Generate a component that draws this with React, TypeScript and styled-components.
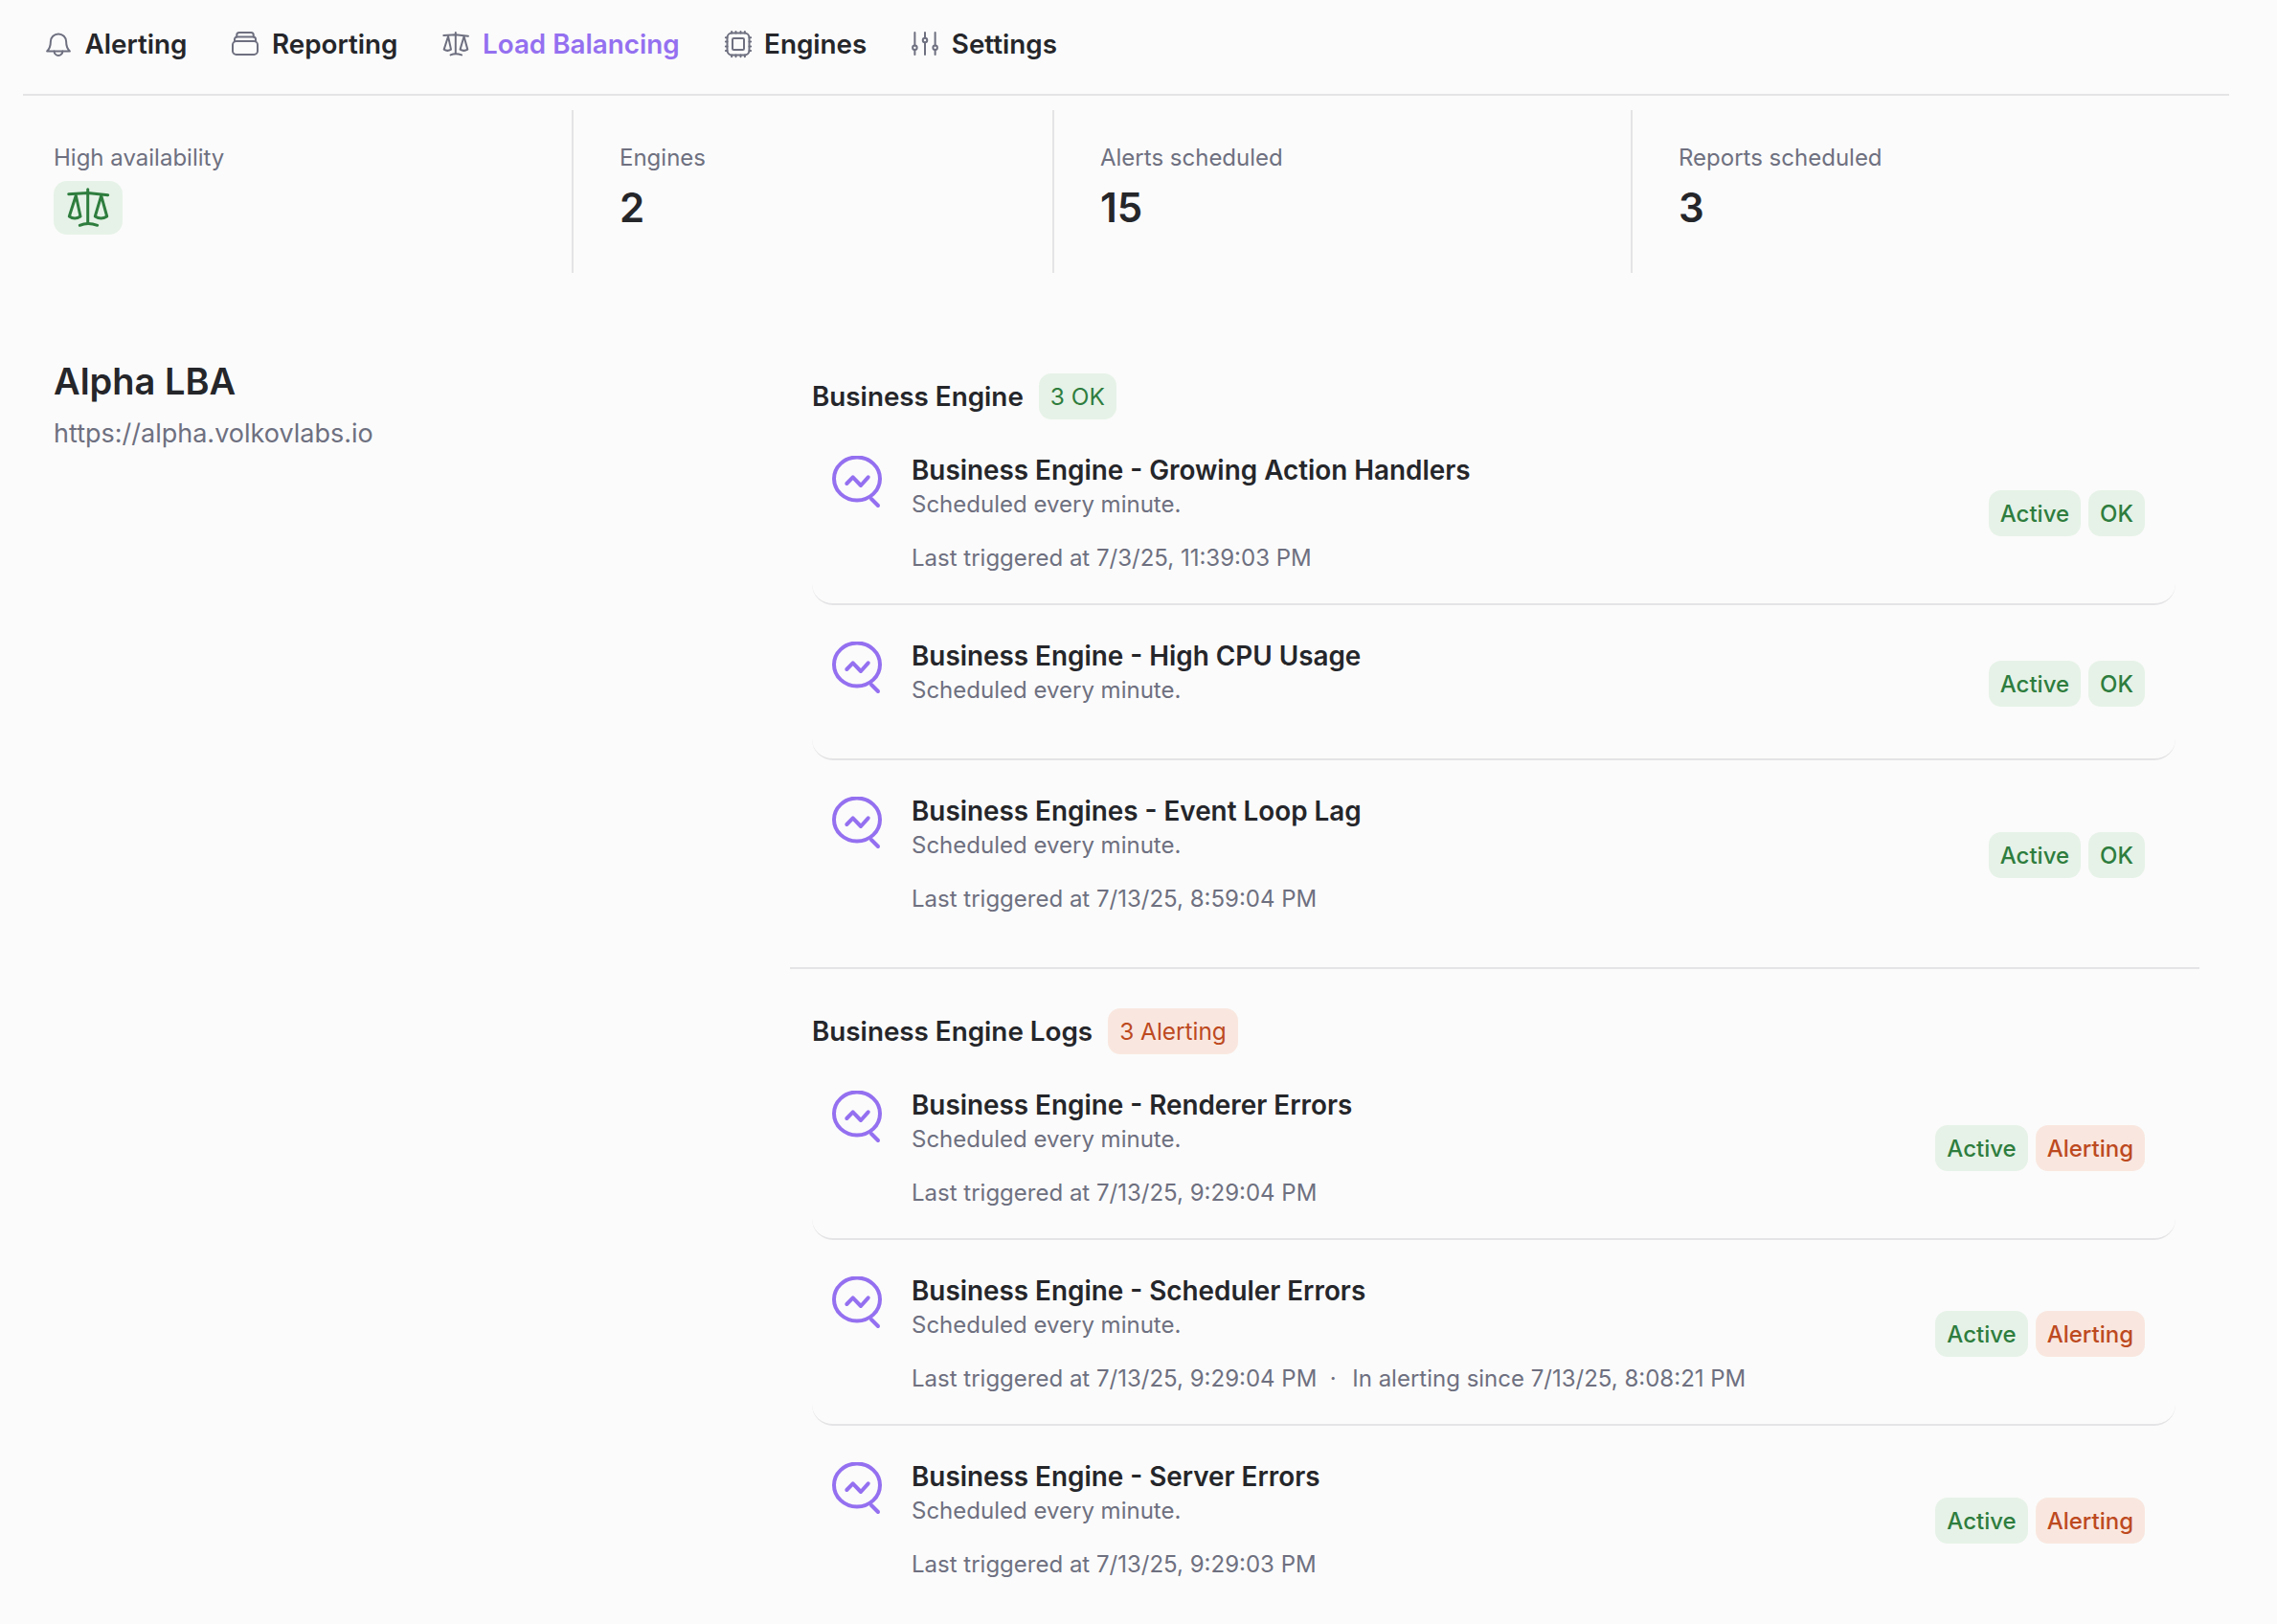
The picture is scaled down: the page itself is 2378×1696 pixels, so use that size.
import React from 'react';
import styled, { createGlobalStyle } from 'styled-components';

const GlobalStyle = createGlobalStyle`
  html, body {
    margin: 0;
    padding: 0;
    background: #fbfbfb;
  }
  body {
    font-family: Inter, "Liberation Sans", sans-serif;
    color: #25262a;
  }
  * {
    box-sizing: border-box;
  }
`;

const Page = styled.div`
  width: 2378px;
  height: 1696px;
  padding: 0 50px 0 24px;
  overflow: hidden;
`;

const Nav = styled.nav`
  display: flex;
  height: 100px;
  padding: 24px 0 0 22px;
  gap: 46px;
  border-bottom: 2px solid #e4e4e6;
`;

const NavItem = styled.a<{ $active?: boolean }>`
  display: flex;
  align-items: center;
  height: 44px;
  gap: 12.5px;
  font-size: 27.8px;
  font-weight: 600;
  color: ${p => (p.$active ? '#9470f0' : '#25262a')};
  svg {
    width: 30px;
    height: 30px;
    fill: none;
    stroke: #6e7080;
    stroke-width: 2;
    stroke-linecap: round;
    stroke-linejoin: round;
  }
  svg * {
    vector-effect: non-scaling-stroke;
  }
`;

const Stats = styled.section`
  display: grid;
  grid-template-columns: 573px 502px 604px 1fr;
  height: 170px;
  margin-top: 15px;
`;

const Stat = styled.div`
  padding: 34px 0 0 48px;
  border-left: 2px solid #e4e4e6;
  &:first-child {
    padding-left: 32px;
    border-left: none;
  }
`;

const StatLabel = styled.div`
  font-size: 24px;
  line-height: 32px;
  color: #6e7080;
`;

const StatValue = styled.div`
  margin-top: 12px;
  font-size: 42px;
  line-height: 48px;
  font-weight: 600;
`;

const StatusIcon = styled.div`
  display: flex;
  align-items: center;
  justify-content: center;
  width: 72px;
  height: 56px;
  margin-top: 8px;
  background: #e6f2e7;
  border-radius: 14px;
  svg {
    width: 48px;
    height: 44px;
    fill: none;
    stroke: #2e7d3e;
    stroke-width: 3;
    stroke-linecap: round;
    stroke-linejoin: round;
  }
`;

const Main = styled.main`
  display: grid;
  grid-template-columns: 801px 1472px;
  margin-top: 86px;
`;

const Instance = styled.div`
  padding-left: 32px;
`;

const InstanceName = styled.h1`
  margin: 0;
  padding-top: 0.5px;
  font-size: 38px;
  line-height: 52px;
  font-weight: 600;
`;

const InstanceUrl = styled.div`
  margin-top: 11.5px;
  font-size: 27px;
  line-height: 36px;
  color: #6e7080;
`;

const Group = styled.section`
  padding: 19px 0 0 23px;
  & + & {
    margin-top: 22px;
    padding-top: 41px;
    border-top: 2px solid #e4e4e6;
  }
`;

const GroupHeader = styled.header`
  display: flex;
  align-items: center;
  gap: 16px;
  height: 48px;
`;

const GroupTitle = styled.h2`
  margin: 0;
  font-size: 27.8px;
  font-weight: 600;
`;

const Badge = styled.span<{ $tone: 'ok' | 'alert'; $regular?: boolean }>`
  display: flex;
  align-items: center;
  height: 48px;
  padding: 0 12px;
  border-radius: 13px;
  font-size: ${p => (p.$regular ? '24.4px' : '24px')};
  font-weight: ${p => (p.$regular ? 400 : 500)};
  color: ${p => (p.$tone === 'ok' ? '#2e7d3e' : '#bd4a1f')};
  background: ${p => (p.$tone === 'ok' ? '#e6f2e7' : '#f9e7df')};
`;

const Row = styled.article<{ $tall: boolean }>`
  display: flex;
  justify-content: space-between;
  align-items: center;
  width: 1424px;
  height: ${p => (p.$tall ? '194px' : '162px')};
  padding: 4px 32px 0 21px;
  border-bottom: 2px solid #e4e4e6;
  border-radius: 0 0 22px 22px;
  &:last-child {
    border-bottom: none;
  }
`;

const RowMain = styled.div`
  display: flex;
  align-self: flex-start;
  gap: 31px;
  padding-top: 30.5px;
  svg {
    flex: none;
    width: 52px;
    height: 56px;
    margin-top: 3px;
    fill: none;
    stroke: #9470f0;
    stroke-width: 4;
    stroke-linecap: round;
    stroke-linejoin: round;
  }
`;

const RowTitle = styled.div`
  font-size: 27.85px;
  line-height: 36px;
  font-weight: 600;
`;

const RowSchedule = styled.div`
  font-size: 24px;
  line-height: 36px;
  color: #6e7080;
`;

const RowMeta = styled.div`
  margin-top: 20px;
  font-size: 24px;
  line-height: 36px;
  color: #6e7080;
`;

const MetaDot = styled.span`
  margin: 0 16.5px 0 13.5px;
`;

const Badges = styled.div`
  display: flex;
  gap: 8px;
`;

const BellIcon = () => (
  <svg viewBox="0 0 24 24">
    <path d="M5.5 10a6.5 6.5 0 0 1 13 0c0 4 1 6 3 8H2.500c2-2 3-4 3-8Z" />
    <path d="M8.500 18a3.500 3.500 0 0 0 7 0" />
  </svg>
);

const ReportIcon = () => (
  <svg viewBox="0 0 24 24">
    <rect x="1.6" y="9.6" width="20.8" height="11.2" rx="3" />
    <path d="M3.200 9.600V8A2 2 0 0 1 5.200 6h13.600a2 2 0 0 1 2 2v1.600" />
    <path d="M5 6V4.400a2 2 0 0 1 2-2h10a2 2 0 0 1 2 2V6" />
  </svg>
);

const ScaleIcon = () => (
  <svg viewBox="0 0 48 44">
    <path d="M23.700 2.700V37.700" />
    <path d="M3.700 7.700 23.700 6.500 44.700 8.700" />
    <path d="M15.300 40.300Q23.700 36.500 33.700 40.300" />
    <path d="M11.300 9.300 4.300 31Q10 35 16 31Z" />
    <path d="M37.700 9.300 31.300 31Q37.500 35 43.700 31Z" />
  </svg>
);

const ChipIcon = () => (
  <svg viewBox="0 0 24 24">
    <rect x="2.800" y="2.800" width="18.400" height="18.400" rx="4" />
    <rect x="7.200" y="7.200" width="9.600" height="9.600" rx="1" />
    <path d="M6.500 1.500v1.300M10 1.500v1.300M14 1.500v1.300M17.500 1.500v1.300M6.500 21.200v1.300M10 21.200v1.300M14 21.200v1.300M17.500 21.200v1.300M1.500 6.500h1.300M1.500 10h1.300M1.500 14h1.300M1.500 17.500h1.300M21.200 6.500h1.300M21.200 10h1.300M21.200 14h1.300M21.200 17.500h1.300" />
  </svg>
);

const SlidersIcon = () => (
  <svg viewBox="0 0 24 24">
    <path d="M3.500 2.400v10.800M3.500 16.800v4M12 2.400v4.600M12 10.600v10.200M20.500 2.400v10.800M20.500 16.800v4" />
    <circle cx="3.500" cy="15" r="1.800" />
    <circle cx="12" cy="8.800" r="1.800" />
    <circle cx="20.500" cy="15" r="1.800" />
  </svg>
);

const AlertRuleIcon = () => (
  <svg viewBox="0 0 52 56">
    <ellipse cx="26" cy="24" rx="24" ry="22.5" />
    <path d="M41 45 48 52" />
    <path d="M15.300 29 21.700 22.300 30 31 37.700 22.300" />
  </svg>
);

type Rule = { name: string; last?: string; since?: string };

const engineRules: Rule[] = [
  { name: 'Business Engine - Growing Action Handlers', last: '7/3/25, 11:39:03 PM' },
  { name: 'Business Engine - High CPU Usage' },
  { name: 'Business Engines - Event Loop Lag', last: '7/13/25, 8:59:04 PM' },
];

const logRules: Rule[] = [
  { name: 'Business Engine - Renderer Errors', last: '7/13/25, 9:29:04 PM' },
  {
    name: 'Business Engine - Scheduler Errors',
    last: '7/13/25, 9:29:04 PM',
    since: '7/13/25, 8:08:21 PM',
  },
  { name: 'Business Engine - Server Errors', last: '7/13/25, 9:29:03 PM' },
];

const RuleRow = ({ rule, alerting }: { rule: Rule; alerting?: boolean }) => (
  <Row $tall={!!rule.last}>
    <RowMain>
      <AlertRuleIcon />
      <div>
        <RowTitle>{rule.name}</RowTitle>
        <RowSchedule>Scheduled every minute.</RowSchedule>
        {rule.last && (
          <RowMeta>
            Last triggered at {rule.last}
            {rule.since && <><MetaDot>·</MetaDot>In alerting since {rule.since}</>}
          </RowMeta>
        )}
      </div>
    </RowMain>
    <Badges>
      <Badge $tone="ok">Active</Badge>
      <Badge $tone={alerting ? 'alert' : 'ok'}>{alerting ? 'Alerting' : 'OK'}</Badge>
    </Badges>
  </Row>
);

const App = () => (
  <Page>
    <GlobalStyle />
    <Nav>
      <NavItem><BellIcon />Alerting</NavItem>
      <NavItem><ReportIcon />Reporting</NavItem>
      <NavItem $active><ScaleIcon />Load Balancing</NavItem>
      <NavItem><ChipIcon />Engines</NavItem>
      <NavItem><SlidersIcon />Settings</NavItem>
    </Nav>
    <Stats>
      <Stat>
        <StatLabel>High availability</StatLabel>
        <StatusIcon><ScaleIcon /></StatusIcon>
      </Stat>
      <Stat>
        <StatLabel>Engines</StatLabel>
        <StatValue>2</StatValue>
      </Stat>
      <Stat>
        <StatLabel>Alerts scheduled</StatLabel>
        <StatValue>15</StatValue>
      </Stat>
      <Stat>
        <StatLabel>Reports scheduled</StatLabel>
        <StatValue>3</StatValue>
      </Stat>
    </Stats>
    <Main>
      <Instance>
        <InstanceName>Alpha LBA</InstanceName>
        <InstanceUrl>https://alpha.volkovlabs.io</InstanceUrl>
      </Instance>
      <div>
        <Group>
          <GroupHeader>
            <GroupTitle>Business Engine</GroupTitle>
            <Badge $tone="ok" $regular>3 OK</Badge>
          </GroupHeader>
          {engineRules.map(r => <RuleRow key={r.name} rule={r} />)}
        </Group>
        <Group>
          <GroupHeader>
            <GroupTitle>Business Engine Logs</GroupTitle>
            <Badge $tone="alert" $regular>3 Alerting</Badge>
          </GroupHeader>
          {logRules.map(r => <RuleRow key={r.name} rule={r} alerting />)}
        </Group>
      </div>
    </Main>
  </Page>
);

export default App;
